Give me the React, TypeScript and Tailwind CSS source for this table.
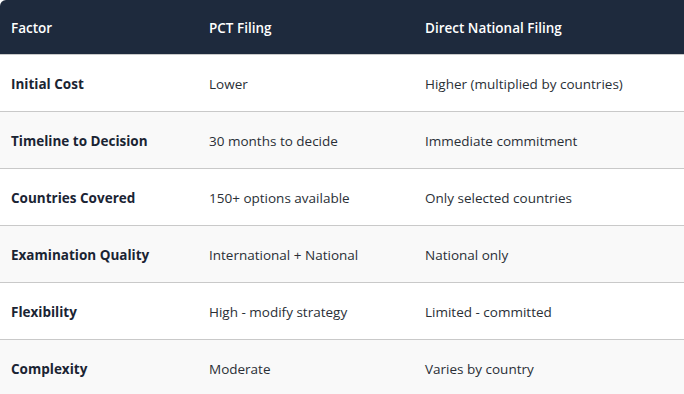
const rows = [
  ['Initial Cost', 'Lower', 'Higher (multiplied by countries)'],
  ['Timeline to Decision', '30 months to decide', 'Immediate commitment'],
  ['Countries Covered', '150+ options available', 'Only selected countries'],
  ['Examination Quality', 'International + National', 'National only'],
  ['Flexibility', 'High - modify strategy', 'Limited - committed'],
  ['Complexity', 'Moderate', 'Varies by country'],
];

export default function App() {
  return (
    <div className="w-[684px] h-[394px] overflow-hidden bg-white font-['Open_Sans',sans-serif] text-[13.5px]">
      <table className="w-full table-fixed border-collapse">
        <colgroup>
          <col className="w-[198px]" />
          <col className="w-[216px]" />
          <col />
        </colgroup>
        <thead>
          <tr className="bg-[#1e2a3d] text-white h-[54px]">
            <th className="px-[11px] pt-[2px] text-left font-semibold rounded-tl-md">Factor</th>
            <th className="px-[11px] pt-[2px] text-left font-semibold">PCT Filing</th>
            <th className="px-[11px] pt-[2px] text-left font-semibold">Direct National Filing</th>
          </tr>
        </thead>
        <tbody>
          {rows.map((r, i) => (
            <tr
              key={r[0]}
              className={`h-[57px] border-t border-[#c9c9c9] ${i % 2 === 1 ? 'bg-[#f9f9f9]' : 'bg-white'}`}
            >
              <td className="px-[11px] pt-[3px] font-bold text-[#1a2433]">{r[0]}</td>
              <td className="px-[11px] pt-[3px] text-[#2a2f36]">{r[1]}</td>
              <td className="px-[11px] pt-[3px] text-[#2a2f36]">{r[2]}</td>
            </tr>
          ))}
        </tbody>
      </table>
    </div>
  );
}
